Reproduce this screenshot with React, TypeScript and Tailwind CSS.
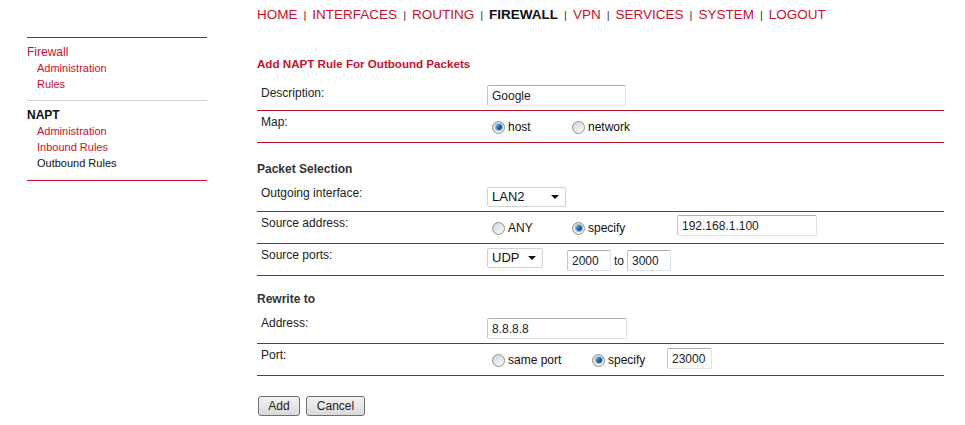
import React from "react";

const navItems = ["HOME", "INTERFACES", "ROUTING", "FIREWALL", "VPN", "SERVICES", "SYSTEM", "LOGOUT"];

function Radio({ checked, label, width }: { checked?: boolean; label: string; width: string }) {
    return (
        <span className={`inline-flex items-center ${width}`}>
            <span className="ml-[5px] flex h-[13px] w-[13px] items-center justify-center rounded-full border border-[#8e8f8f] bg-gradient-to-br from-[#d4d4d4] to-[#fbfbfb]">
                {checked && (
                    <span className="h-[6px] w-[6px] rounded-full bg-gradient-to-br from-[#7fb8e6] via-[#1d69b0] to-[#0c3f72] shadow-[0_0_0_1px_#9cbbd6]" />
                )}
            </span>
            <span className="ml-[3px] text-[12px] leading-[16px] text-[#111]">{label}</span>
        </span>
    );
}

function TextInput({ value, width, className = "" }: { value: string; width: string; className?: string }) {
    return (
        <span
            className={`flex h-[21px] items-center rounded-[2px] border border-[#dfe3ea] border-t-[#abadb3] border-l-[#c3c6cc] bg-white pl-[4px] text-[12px] text-[#222] ${width} ${className}`}
        >
            {value}
        </span>
    );
}

function Select({ value, width, className = "" }: { value: string; width: string; className?: string }) {
    return (
        <span
            className={`flex h-[20px] items-center justify-between rounded-[2px] border border-[#cfd2d6] bg-white pl-[4px] pr-[6px] text-[13px] text-[#111] ${width} ${className}`}
        >
            {value}
            <span className="h-0 w-0 border-x-[4px] border-t-[4px] border-x-transparent border-t-[#111]" />
        </span>
    );
}

function Row({ label, children, h }: { label: string; children: React.ReactNode; h: string }) {
    return (
        <div className={`flex border-b border-[#b8142c] ${h}`}>
            <div className="w-[230px] pl-[4px] pt-[3px] text-[12px] leading-[16px] text-[#222]">{label}</div>
            <div className="flex flex-1 items-start">{children}</div>
        </div>
    );
}

export default function App() {
    return (
        <div className="flex h-[425px] w-[965px] bg-white font-['Liberation_Sans',Arial,sans-serif]">
            {/* Sidebar */}
            <div className="ml-[27px] w-[180px] pt-[37px]">
                <div className="border-t border-[#c8102e] pt-[6px] pb-[8px]">
                    <div className="text-[12px] leading-[16px] text-[#c8102e]">Firewall</div>
                    <div className="pl-[10px] text-[11px] leading-[16px] text-[#c8102e]">
                        <div>Administration</div>
                        <div>Rules</div>
                    </div>
                </div>
                <div className="border-t border-[#d3d3dc] pt-[6px] pb-[9px]">
                    <div className="text-[12px] font-bold leading-[16px] text-[#111]">NAPT</div>
                    <div className="pl-[10px] text-[11px] leading-[16px]">
                        <div className="text-[#c8102e]">Administration</div>
                        <div className="text-[#c8102e]">Inbound Rules</div>
                        <div className="text-[#111]">Outbound Rules</div>
                    </div>
                </div>
                <div className="border-t border-[#c8102e]" />
            </div>

            {/* Main */}
            <div className="ml-[50px] w-[687px]">
                <nav className="flex h-[30px] items-center text-[13.5px]">
                    {navItems.map((item, i) => (
                        <React.Fragment key={item}>
                            {i > 0 && <span className="px-[6px] text-[11px] text-[#333]">|</span>}
                            <span className={item === "FIREWALL" ? "font-bold text-[#111]" : "text-[#c8102e]"}>{item}</span>
                        </React.Fragment>
                    ))}
                </nav>

                <h1 className="mt-[26px] mb-[10px] text-[11.6px] font-bold leading-[16px] text-[#c8102e]">
                    Add NAPT Rule For Outbound Packets
                </h1>

                <Row label="Description:" h="h-[29px]">
                    <TextInput value="Google" width="w-[139px]" className="mt-[3px]" />
                </Row>
                <Row label="Map:" h="h-[32px]">
                    <div className="mt-[8px] flex">
                        <Radio checked label="host" width="w-[80px]" />
                        <Radio label="network" width="w-[80px]" />
                    </div>
                </Row>

                <div className="h-[39px] pt-[18px] text-[12px] font-bold leading-[16px] text-[#333]">Packet Selection</div>

                <Row label="Outgoing interface:" h="h-[30px]">
                    <Select value="LAN2" width="w-[79px]" className="mt-[5px]" />
                </Row>
                <Row label="Source address:" h="h-[32px]">
                    <div className="mt-[8px] flex">
                        <Radio label="ANY" width="w-[80px]" />
                        <Radio checked label="specify" width="w-[110px]" />
                    </div>
                    <TextInput value="192.168.1.100" width="w-[140px]" className="mt-[3px]" />
                </Row>
                <Row label="Source ports:" h="h-[32px]">
                    <Select value="UDP" width="w-[56px]" className="mt-[4px]" />
                    <div className="ml-[24px] mt-[6px] flex items-center">
                        <TextInput value="2000" width="w-[44px]" />
                        <span className="px-[3px] text-[12px] text-[#222]">to</span>
                        <TextInput value="3000" width="w-[44px]" />
                    </div>
                </Row>

                <div className="h-[36px] pt-[15px] text-[12px] font-bold leading-[16px] text-[#333]">Rewrite to</div>

                <Row label="Address:" h="h-[32px]">
                    <TextInput value="8.8.8.8" width="w-[140px]" className="mt-[6px]" />
                </Row>
                <Row label="Port:" h="h-[32px]">
                    <div className="mt-[8px] flex">
                        <Radio label="same port" width="w-[100px]" />
                        <Radio checked label="specify" width="w-[80px]" />
                    </div>
                    <TextInput value="23000" width="w-[45px]" className="mt-[4px]" />
                </Row>

                <div className="mt-[20px] flex gap-[6px] pl-[1px]">
                    <button className="h-[20px] w-[42px] rounded-[3px] border border-[#707070] bg-gradient-to-b from-[#f3f3f3] to-[#d9d9d9] text-[12px] text-[#222]">
                        Add
                    </button>
                    <button className="h-[20px] w-[59px] rounded-[3px] border border-[#707070] bg-gradient-to-b from-[#f3f3f3] to-[#d9d9d9] text-[12px] text-[#222]">
                        Cancel
                    </button>
                </div>
            </div>
        </div>
    );
}
